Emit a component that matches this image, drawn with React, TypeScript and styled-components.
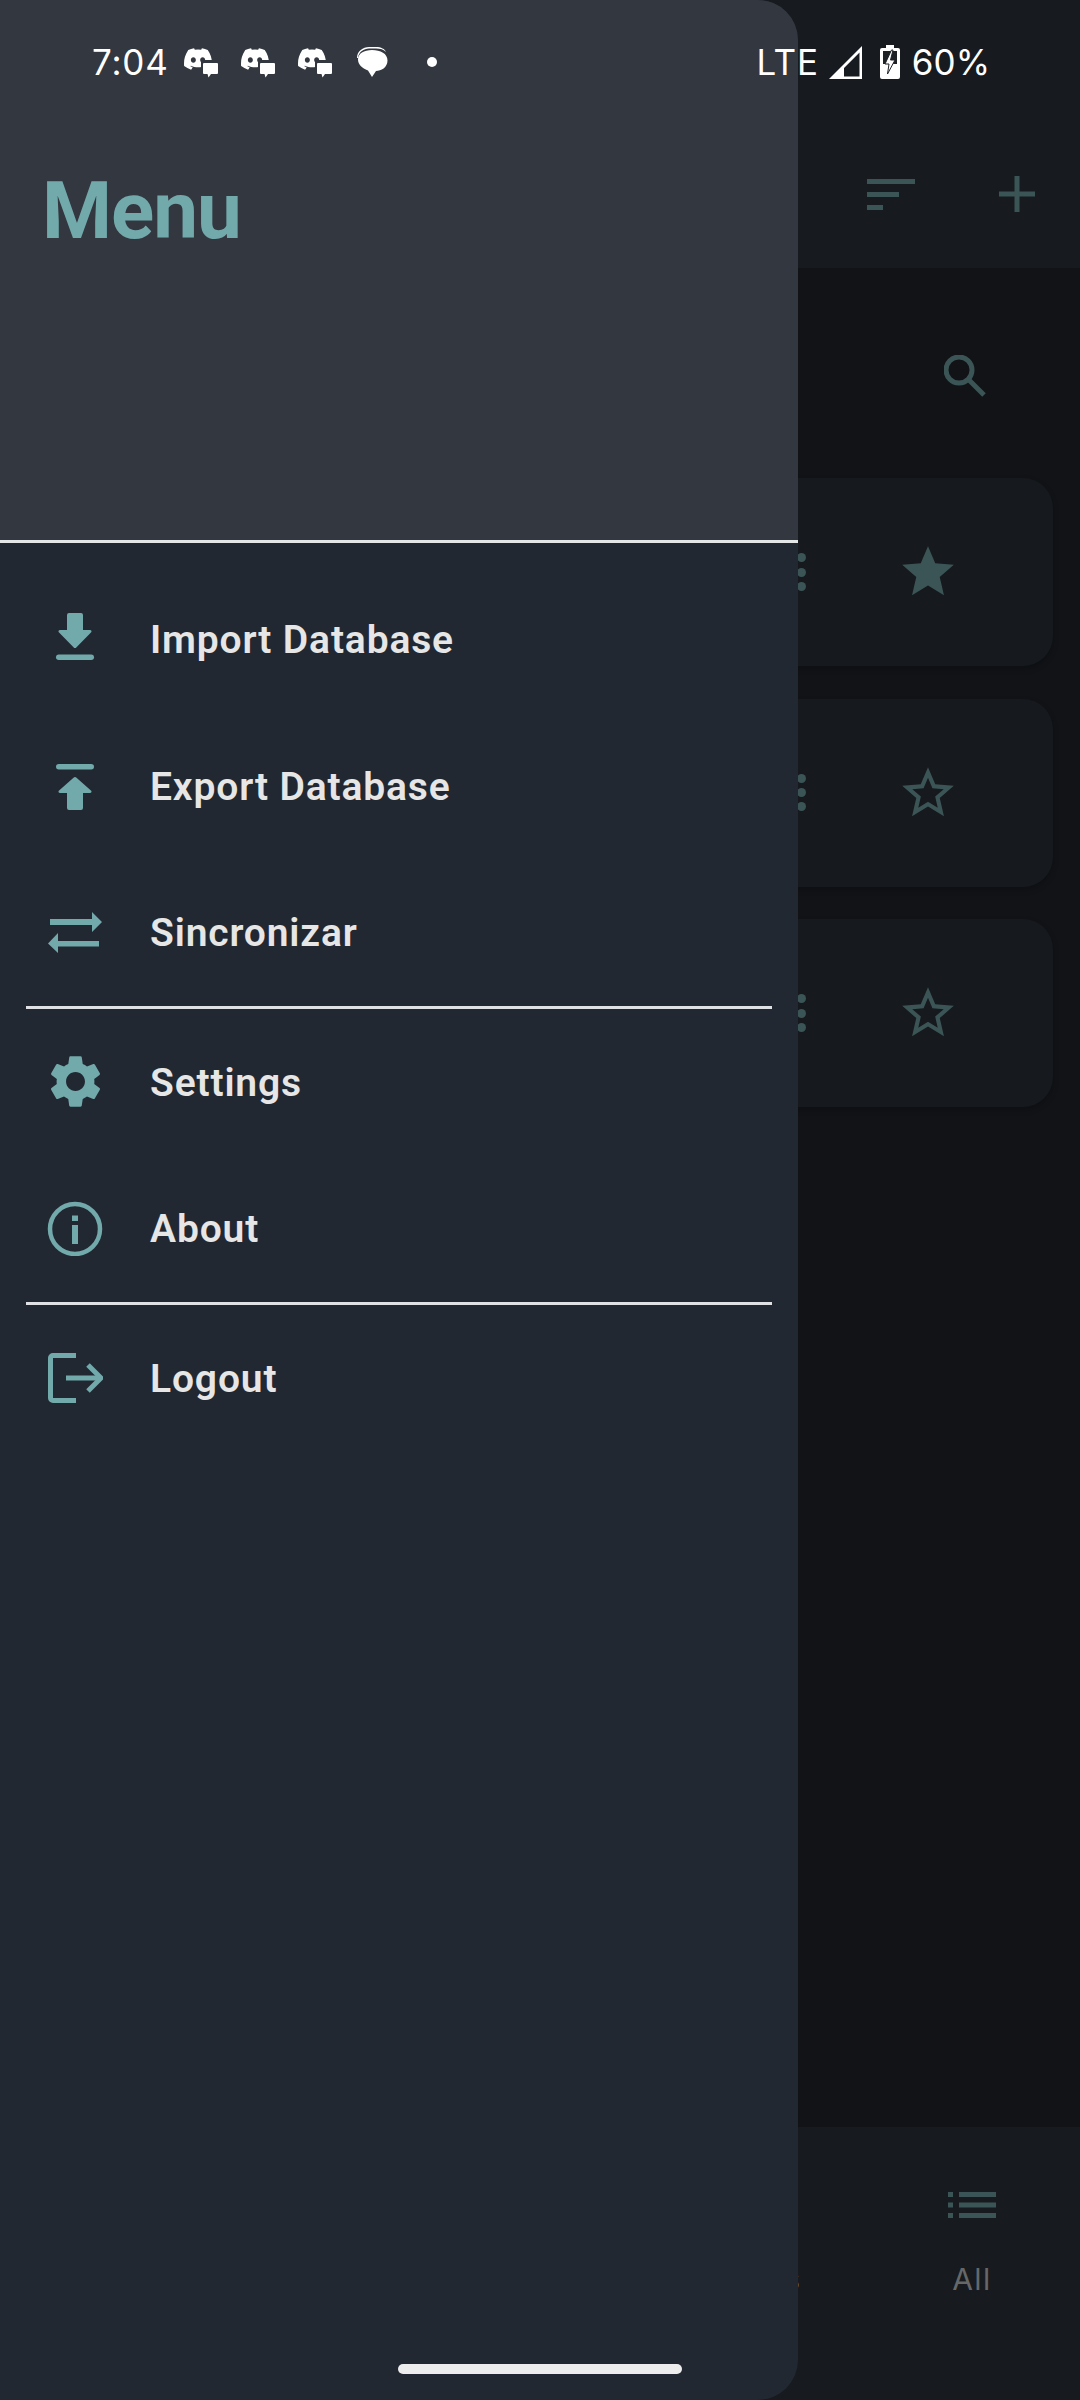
import * as React from "react";
import styled, { createGlobalStyle } from "styled-components";
import { MdSettings } from "react-icons/md";

const TEAL = "#72a9ab";
const DIM = "#3b5455";
const HEADER_BG = "#333740";
const DRAWER_BG = "#212832";
const STATUS_FONT = "Inter, 'Noto Sans', sans-serif";

const GlobalStyle = createGlobalStyle`
  html, body {
    margin: 0;
    padding: 0;
    background: #111317;
  }
  * {
    box-sizing: border-box;
  }
`;

const Screen = styled.div`
  position: relative;
  width: 1080px;
  height: 2400px;
  overflow: hidden;
  display: flex;
  flex-direction: column;
  background: #111317;
  font-family: Roboto, sans-serif;
`;

const TopBar = styled.header`
  height: 268px;
  padding: 120px 45px 0 0;
  background: #171a1e;
  display: flex;
  justify-content: flex-end;
  align-items: center;
  gap: 84px;
`;

const BarIcon = styled.svg`
  display: block;
  fill: ${DIM};
`;

const Content = styled.main`
  flex: 1;
  padding: 0 27px 0 0;
  display: flex;
  flex-direction: column;
`;

const SearchRow = styled.div`
  height: 210px;
  padding: 87px 65px 0 0;
  display: flex;
  justify-content: flex-end;
  align-items: flex-start;
`;

const CardList = styled.div`
  display: flex;
  flex-direction: column;
  gap: 32.5px;
`;

const Card = styled.div`
  height: 188px;
  margin-left: 120px;
  padding-right: 94px;
  border-radius: 30px;
  background: #16191d;
  box-shadow: 0 3px 6px rgba(0, 0, 0, 0.2);
  display: flex;
  justify-content: flex-end;
  align-items: center;
  gap: 91px;
`;

const Dots = styled.div`
  display: flex;
  flex-direction: column;
  gap: 5.4px;
`;

const Dot = styled.span`
  width: 9px;
  height: 9px;
  border-radius: 50%;
  background: ${DIM};
`;

const Star = styled.svg`
  display: block;
  fill: ${DIM};
`;

const BottomNav = styled.nav`
  height: 273px;
  background: #171a1e;
  display: flex;
  justify-content: flex-end;
`;

const NavTab = styled.div`
  width: 216px;
  padding-top: 65px;
  display: flex;
  flex-direction: column;
  align-items: center;
  gap: 43px;
`;

const NavIconSlot = styled.div`
  height: 26px;
  svg {
    display: block;
  }
`;

const NavLabel = styled.span`
  font-family: ${STATUS_FONT};
  font-size: 30px;
  letter-spacing: 1.5px;
  line-height: 36px;
  color: #666769;
`;

const Drawer = styled.aside`
  position: absolute;
  left: 0;
  top: 0;
  bottom: 0;
  width: 798px;
  border-radius: 0 40px 40px 0;
  overflow: hidden;
  background: ${DRAWER_BG};
  display: flex;
  flex-direction: column;
`;

const DrawerHeader = styled.div`
  height: 543px;
  padding: 164px 0 0 42px;
  background: ${HEADER_BG};
  border-bottom: 3px solid #e4e6e8;
`;

const DrawerTitle = styled.h1`
  margin: 0;
  font-size: 80px;
  line-height: 94px;
  font-weight: 700;
  letter-spacing: -1px;
  color: ${TEAL};
`;

const MenuList = styled.div`
  padding-top: 23px;
  display: flex;
  flex-direction: column;
`;

const MenuRow = styled.div`
  height: 146.5px;
  display: flex;
  align-items: center;
`;

const MenuIconSlot = styled.div`
  width: 150px;
  display: flex;
  justify-content: center;
  align-items: center;
  color: ${TEAL};
  svg {
    display: block;
  }
`;

const MenuLabel = styled.span`
  padding-top: 2px;
  font-size: 39px;
  font-weight: 600;
  letter-spacing: 0.85px;
  color: #e6e6e6;
`;

const Divider = styled.div`
  height: 3px;
  margin: 0 26px;
  background: #dfe1e4;
`;

const HomeHandle = styled.div`
  position: absolute;
  left: 398px;
  bottom: 26px;
  width: 284px;
  height: 10px;
  border-radius: 5px;
  background: #ededed;
`;

const StatusBar = styled.div`
  position: absolute;
  left: 0;
  right: 0;
  top: 40px;
  height: 44px;
  padding: 0 90px 0 92px;
  display: flex;
  justify-content: space-between;
  align-items: center;
  color: #fff;
  font-family: ${STATUS_FONT};
  font-size: 35px;
`;

const StatusGroup = styled.div`
  display: flex;
  align-items: center;
`;

const StatusText = styled.span<{ $gap?: number; $spacing?: number }>`
  line-height: 44px;
  letter-spacing: ${({ $spacing }) => $spacing ?? 0}px;
  margin-right: ${({ $gap }) => $gap ?? 0}px;
`;

const StatusIcon = styled.svg<{ $gap?: number }>`
  display: block;
  margin-right: ${({ $gap }) => $gap ?? 0}px;
  fill: #fff;
`;

const DISCORD =
  "M13.545 2.907a13.2 13.2 0 0 0-3.257-1.011.05.05 0 0 0-.052.025c-.141.25-.297.577-.406.833a12.2 12.2 0 0 0-3.658 0 8 8 0 0 0-.412-.833.05.05 0 0 0-.052-.025c-1.125.194-2.22.534-3.257 1.011a.04.04 0 0 0-.021.018C.356 6.024-.213 9.047.066 12.032q.003.022.021.037a13.3 13.3 0 0 0 3.995 2.02.05.05 0 0 0 .056-.019q.463-.63.818-1.329a.05.05 0 0 0-.01-.059l-.018-.011a9 9 0 0 1-1.248-.595.05.05 0 0 1-.02-.066l.015-.019q.127-.095.248-.195a.05.05 0 0 1 .051-.007c2.619 1.196 5.454 1.196 8.041 0a.05.05 0 0 1 .053.007q.121.1.248.195a.05.05 0 0 1-.004.085 8 8 0 0 1-1.249.594.05.05 0 0 0-.03.03.05.05 0 0 0 .003.041c.24.465.515.909.817 1.329a.05.05 0 0 0 .056.019 13.2 13.2 0 0 0 4.001-2.02.05.05 0 0 0 .021-.037c.334-3.451-.559-6.449-2.366-9.106a.03.03 0 0 0-.02-.019m-8.198 7.307c-.789 0-1.438-.724-1.438-1.612s.637-1.613 1.438-1.613c.807 0 1.45.73 1.438 1.613 0 .888-.637 1.612-1.438 1.612m5.316 0c-.788 0-1.438-.724-1.438-1.612s.637-1.613 1.438-1.613c.807 0 1.451.73 1.438 1.613 0 .888-.631 1.612-1.438 1.612";

function DiscordBubble({ gap }: { gap: number }) {
  return (
    <StatusIcon $gap={gap} width="34" height="32" viewBox="0 0 34 32">
      <path d={DISCORD} transform="translate(0 -1) scale(1.75)" />
      <rect x="17" y="14" width="17" height="18" fill={HEADER_BG} />
      <path d="M20 17h13a1 1 0 0 1 1 1v9a1 1 0 0 1-1 1h-6l-2.500 3.500-1-3.500H20a1 1 0 0 1-1-1v-9a1 1 0 0 1 1-1z" />
    </StatusIcon>
  );
}

function MessagesIcon({ gap }: { gap: number }) {
  return (
    <StatusIcon $gap={gap} width="32" height="32" viewBox="0 0 32 32">
      <path d="M1 12C1 5 7 1 13 1h7c5 0 9 2 10 5-2-2.500-6-3.500-10-3.500h-7C8 2.500 2.500 6 2 12z" />
      <path d="M16 4c8.500 0 15.500 3.500 15.500 10.500S25 25 20 25l-4 6-4-6.500C6 22 2 18.500 2 13.500 2 7.500 8 4 16 4z" />
    </StatusIcon>
  );
}

function SignalIcon({ gap }: { gap: number }) {
  return (
    <StatusIcon $gap={gap} width="33" height="33" viewBox="0 0 33 33">
      <path fillRule="evenodd" d="M33 0v33H0zM30.500 6.500 15 22v8.500h15.500z" />
    </StatusIcon>
  );
}

function BatteryIcon({ gap }: { gap: number }) {
  return (
    <StatusIcon $gap={gap} width="20" height="34" viewBox="0 0 20 34">
      <path d="M6 0h8v3h4a2 2 0 0 1 2 2v27a2 2 0 0 1-2 2H2a2 2 0 0 1-2-2V5a2 2 0 0 1 2-2h4z" />
      <rect x="3" y="6" width="14" height="13" fill="#1e2126" />
      <path d="M11.500 5 5 19h4l-1.500 10L15 15h-4.500l2.500-10z" stroke="#1e2126" strokeWidth="1" />
    </StatusIcon>
  );
}

function ImportIcon() {
  return (
    <svg width="48" height="56" viewBox="0 0 48 56" fill="currentColor">
      <path d="M16 4a2 2 0 0 1 2-2h12a2 2 0 0 1 2 2v15h7c1.300 0 2 1.400 1.200 2.300L25.500 36.200a2 2 0 0 1-3 0L7.800 21.300C7 20.400 7.700 19 9 19h7z" />
      <rect x="5" y="43.500" width="38" height="5.500" rx="2.750" />
    </svg>
  );
}

function ExportIcon() {
  return (
    <svg width="48" height="56" viewBox="0 0 48 56" fill="currentColor">
      <rect x="5" y="6" width="38" height="5.500" rx="2.750" />
      <path d="M16 50a2 2 0 0 0 2 2h12a2 2 0 0 0 2-2V35h7c1.300 0 2-1.400 1.200-2.300L25.500 19.800a2 2 0 0 0-3 0L7.800 32.700C7 33.600 7.700 35 9 35h7z" />
    </svg>
  );
}

function SyncIcon() {
  return (
    <svg width="56" height="48" viewBox="0 0 56 48" fill="currentColor">
      <path d="M3 11h42V4l10 10-10 10v-7H3z" />
      <path d="M52 33H11v-8L1 35.500 11 45v-6.500h41z" />
    </svg>
  );
}

function InfoIcon() {
  return (
    <svg width="56" height="56" viewBox="0 0 56 56" fill="none" stroke="currentColor">
      <circle cx="28" cy="29" r="25" strokeWidth="4.500" />
      <path d="M28 25v19" strokeWidth="6" />
      <path d="M28 15.500v5.500" strokeWidth="6" />
    </svg>
  );
}

function LogoutIcon() {
  return (
    <svg width="56" height="52" viewBox="0 0 56 52" fill="none" stroke="currentColor" strokeWidth="5">
      <path d="M29 3.500H6a2.500 2.500 0 0 0-2.500 2.500v40a2.500 2.500 0 0 0 2.500 2.500h23" />
      <path d="M19 26h35" />
      <path d="M41 13l13 13-13 13" />
    </svg>
  );
}

function StarIcon({ filled }: { filled?: boolean }) {
  return (
    <Star width="62" height="62" viewBox="0 0 24 24">
      {filled ? (
        <path d="M12 17.270 18.180 21l-1.640-7.030L22 9.240l-7.190-.610L12 2 9.190 8.630 2 9.240l5.460 4.730L5.820 21z" />
      ) : (
        <path d="M22 9.240l-7.190-.620L12 2 9.190 8.630 2 9.240l5.460 4.730L5.820 21 12 17.270 18.180 21l-1.630-7.030L22 9.240zM12 15.400l-3.760 2.270 1-4.280-3.320-2.880 4.380-.380L12 6.100l1.710 4.040 4.380.380-3.320 2.880 1 4.280L12 15.400z" />
      )}
    </Star>
  );
}

function MenuItem({ icon, label }: { icon: React.ReactNode; label: string }) {
  return (
    <MenuRow>
      <MenuIconSlot>{icon}</MenuIconSlot>
      <MenuLabel>{label}</MenuLabel>
    </MenuRow>
  );
}

function NoteCard({ filled }: { filled?: boolean }) {
  return (
    <Card>
      <Dots>
        <Dot />
        <Dot />
        <Dot />
      </Dots>
      <StarIcon filled={filled} />
    </Card>
  );
}

export default function App() {
  return (
    <Screen>
      <GlobalStyle />
      <TopBar>
        <BarIcon width="48" height="31" viewBox="0 0 48 31">
          <rect x="0" y="0" width="48" height="5" />
          <rect x="0" y="13" width="32" height="5" />
          <rect x="0" y="26" width="16" height="5" />
        </BarIcon>
        <BarIcon width="36" height="36" viewBox="0 0 36 36">
          <rect x="0" y="15.500" width="36" height="5" />
          <rect x="15.500" y="0" width="5" height="36" />
        </BarIcon>
      </TopBar>
      <Content>
        <SearchRow>
          <svg width="44" height="44" viewBox="0 0 44 44" fill="none" stroke={DIM} strokeWidth="5">
            <circle cx="15" cy="15" r="13" />
            <path d="M25 25l15 15" />
          </svg>
        </SearchRow>
        <CardList>
          <NoteCard filled />
          <NoteCard />
          <NoteCard />
        </CardList>
      </Content>
      <BottomNav>
        <NavTab>
          <NavIconSlot />
          <NavLabel>Notes</NavLabel>
        </NavTab>
        <NavTab>
          <NavIconSlot>
            <svg width="48" height="26" viewBox="0 0 48 26" fill={DIM}>
              <rect x="0" y="0" width="5" height="5" />
              <rect x="11" y="0" width="37" height="5" />
              <rect x="0" y="10.500" width="5" height="5" />
              <rect x="11" y="10.500" width="37" height="5" />
              <rect x="0" y="21" width="5" height="5" />
              <rect x="11" y="21" width="37" height="5" />
            </svg>
          </NavIconSlot>
          <NavLabel>All</NavLabel>
        </NavTab>
      </BottomNav>

      <Drawer>
        <DrawerHeader>
          <DrawerTitle>Menu</DrawerTitle>
        </DrawerHeader>
        <MenuList>
          <MenuItem icon={<ImportIcon />} label="Import Database" />
          <MenuItem icon={<ExportIcon />} label="Export Database" />
          <MenuItem icon={<SyncIcon />} label="Sincronizar" />
          <Divider />
          <MenuItem icon={<MdSettings size={63} />} label="Settings" />
          <MenuItem icon={<InfoIcon />} label="About" />
          <Divider />
          <MenuItem icon={<LogoutIcon />} label="Logout" />
        </MenuList>
      </Drawer>

      <StatusBar>
        <StatusGroup>
          <StatusText $gap={15} $spacing={0.8}>7:04</StatusText>
          <DiscordBubble gap={23} />
          <DiscordBubble gap={23} />
          <DiscordBubble gap={24} />
          <MessagesIcon gap={39} />
          <StatusIcon width="10" height="10" viewBox="0 0 10 10">
            <circle cx="5" cy="5" r="5" />
          </StatusIcon>
        </StatusGroup>
        <StatusGroup>
          <StatusText $gap={10} $spacing={0.8}>LTE</StatusText>
          <SignalIcon gap={18} />
          <BatteryIcon gap={12} />
          <StatusText>60%</StatusText>
        </StatusGroup>
      </StatusBar>
      <HomeHandle />
    </Screen>
  );
}
